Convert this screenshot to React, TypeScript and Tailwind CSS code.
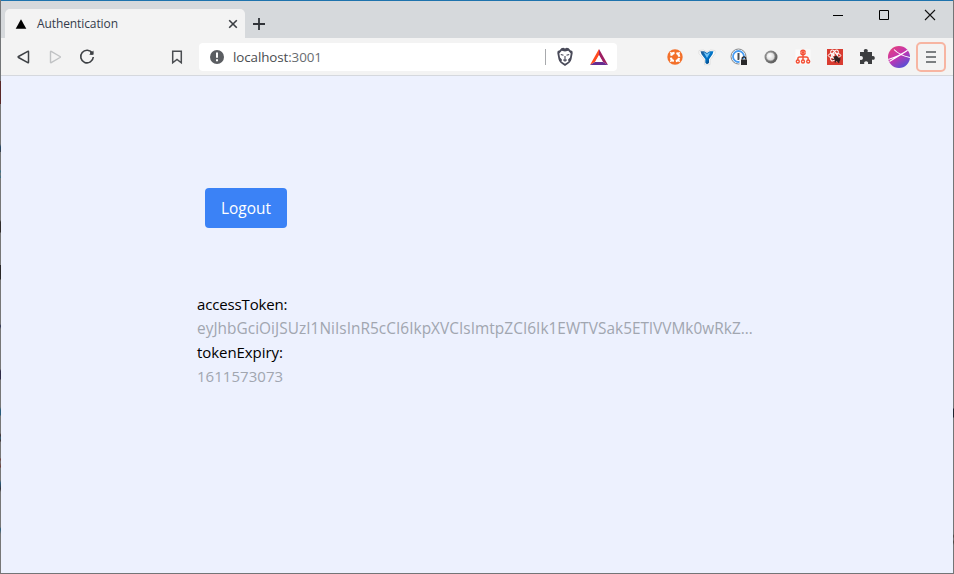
import type { ReactNode } from "react";

function Icon({ children, className = "" }: { children: ReactNode; className?: string }) {
  return (
    <svg viewBox="0 0 24 24" className={`h-6 w-6 shrink-0 ${className}`} fill="none">
      {children}
    </svg>
  );
}

function TabStrip() {
  return (
    <div className="flex h-[37px] shrink-0 items-end bg-[#d6d9dc] pl-1">
      <div className="flex h-[29px] w-[240px] items-center rounded-t-[5px] bg-[#f3f3f3] pl-[10px] pr-[6px]">
        <svg viewBox="0 0 12 12" className="h-3 w-3">
          <path d="M6 1.2 11.3 10.8H.7Z" fill="#000" />
        </svg>
        <span className="ml-[10px] flex-1 text-[12px] leading-[16px] tracking-[-0.1px] text-[#333b4b]">Authentication</span>
        <svg viewBox="0 0 12 12" className="h-3 w-3" fill="none">
          <path d="m2.2 2.2 7.6 7.6m0-7.6L2.2 9.8" stroke="#3b3e43" strokeWidth="1.6" />
        </svg>
      </div>
      <svg viewBox="0 0 28 29" className="h-[29px] w-7" fill="none">
        <path d="M8 15h12M14 9v12" stroke="#303338" strokeWidth="1.8" />
      </svg>
      <div className="ml-auto flex h-[37px] w-[138px]">
        <svg viewBox="0 0 138 37" className="h-[37px] w-[138px]" fill="none">
          <path d="M18 14.5h10" stroke="#000" />
          <path d="M64.5 9.5h9v9h-9Z" stroke="#000" />
          <path d="m110 9 10 10m0-10-10 10" stroke="#111" strokeWidth="1.1" />
        </svg>
      </div>
    </div>
  );
}

function AddressBar() {
  return (
    <div className="ml-[10px] flex h-7 w-[418px] items-center rounded-[4px] bg-white pl-[6px] pr-[6px]">
      <Icon>
        <circle cx="12" cy="12" r="7" fill="#5b5e62" />
        <path d="M12 7.6v5.2" stroke="#fff" strokeWidth="2" />
        <path d="M12 14.3v2" stroke="#fff" strokeWidth="2" />
      </Icon>
      <span className="ml-1 flex-1 text-[13.4px] leading-[20px] tracking-[-0.1px] text-[#4a4d51]">localhost<span className="text-[#696c70]">:3001</span></span>
      <span className="h-4 w-px bg-[#a8aaad]" />
      <Icon className="ml-[7px]">
        <path d="m8.3 3.2 2-.4L12 3.4l1.7-.6 2 .4 1.6 2 2 .8.4 2-1.2 6.3c-.5 2.4-2.7 4.4-6.5 6.8-3.8-2.4-6-4.4-6.5-6.8L4.3 8l.4-2 2-.8Z" fill="#494a59" />
        <path d="m8.700 5.800 3.300.6 3.300-.6 2.400 2.700-.7 4-2 2.200.6 1.700L12 18.800l-3.600-2.400.6-1.700-2-2.200-.7-4Z" fill="#fff" />
        <path d="m7.800 9.500 2.700.8m5.700-.8-2.700.8M12 11v3.500m-1.800.7 1.800-.8 1.800.8M12 15v1.700" stroke="#494a59" strokeWidth="1.100" />
      </Icon>
      <Icon className="ml-[10px]">
        <path d="M12 4 3 20l5-3 4-7Z" fill="#ff4b20" />
        <path d="m12 4 9 16-5-3-4-7Z" fill="#9e1f63" />
        <path d="M3 20h18l-5-3H8Z" fill="#662d91" />
        <path d="m12 10.400-3.700 6.300h7.400Z" fill="#fff" />
      </Icon>
    </div>
  );
}

function Extensions() {
  return (
    <div className="ml-auto flex items-center gap-2">
      <Icon>
        <circle cx="12" cy="12" r="7.7" fill="#f3702a" />
        <circle cx="12" cy="12" r="4.200" stroke="#fff" strokeWidth="2.200" strokeDasharray="4.600 2" strokeDashoffset="-1" />
        <path d="m7.300 7.300 1.800 1.800m5.800 5.800 1.800 1.800m0-9.400-1.800 1.800m-5.800 5.800-1.800 1.800" stroke="#fff" strokeWidth="1.500" />
      </Icon>
      <Icon>
        <path d="M4 5.500 8.500 5 12 7l3.500-2 4.500.5v3L15 15v4.700H9.500V15L4 8.500Z" fill="#fff" stroke="#d4d4d4" strokeWidth=".7" />
        <path d="M5.500 6.200h3.700L12 8l2.800-1.800h3.700l-1 3-3.500 5v3.600q-2 2.400-3.700 0v-3.600l-3.800-5Z" fill="url(#yBlue)" />
        <path d="m8.500 7 3.500 6 3.500-6-3.500 2Z" fill="#72c2f5" />
        <defs><linearGradient id="yBlue" x1="0" y1="0" x2="1" y2="1"><stop stopColor="#235a91" /><stop offset=".5" stopColor="#0077cc" /><stop offset="1" stopColor="#092c5d" /></linearGradient></defs>
      </Icon>
      <Icon>
        <circle cx="11.500" cy="11.500" r="7.500" fill="#fff" stroke="#85878a" strokeWidth="1" />
        <circle cx="11.500" cy="11.500" r="5.500" stroke="#499df2" strokeWidth="1.800" />
        <path d="M11.500 8v7" stroke="#4b4e53" strokeWidth="2" />
        <path d="M12.500 14h9v7h-9Z" fill="#f3f3f3" />
        <path d="M14 14.500h6V20h-6Z" fill="#29292b" />
        <path d="M15.200 14.500V13q1.800-2.400 3.600 0v1.500" stroke="#29292b" strokeWidth="1.300" />
      </Icon>
      <Icon>
        <circle cx="12" cy="12" r="6.500" fill="url(#orbEdge)" />
        <circle cx="11.500" cy="11.500" r="4.300" fill="url(#orb)" stroke="#999" strokeWidth=".7" />
        <defs><linearGradient id="orbEdge" x1="0" y1="0" x2="1" y2="1"><stop stopColor="#999" /><stop offset="1" stopColor="#505050" /></linearGradient><radialGradient id="orb" cx=".4" cy=".4"><stop stopColor="#fff" /><stop offset="1" stopColor="#ddd" /></radialGradient></defs>
      </Icon>
      <Icon>
        <path d="M4.500 4.500h15v15h-15Z" fill="#fafafa" />
        <circle cx="12" cy="7.500" r="2.900" fill="#f45137" />
        <path d="m11 6.500-1 1 1 1m2-2 1 1-1 1" stroke="#fff" strokeWidth=".7" />
        <path d="M12 10v5m-5.200 0v-1q0-2 2-2h6.400q2 0 2 2v1" stroke="#f45137" strokeWidth="1.400" />
        <g stroke="#f45137" strokeWidth="1.400"><circle cx="6.800" cy="16.500" r="1.500" /><circle cx="12" cy="16.500" r="1.500" /><circle cx="17.200" cy="16.500" r="1.500" /></g>
      </Icon>
      <Icon>
        <path d="M4 4h16v16H4Z" fill="#d93c31" />
        <g stroke="#fff" strokeWidth="1"><ellipse cx="11.500" cy="10.500" rx="6.300" ry="2.400" /><ellipse cx="11.500" cy="10.500" rx="2.400" ry="6" transform="rotate(30 11.500 10.500)" /><ellipse cx="11.500" cy="10.500" rx="2.400" ry="6" transform="rotate(-30 11.500 10.500)" /></g>
        <path d="m10.500 12 3-1.500 4 4-1.500 3-4-2Z" fill="#302021" />
        <path d="m9.500 14.500 8-1.500m-4.500-2 3 7m-4-.5 2-6" stroke="#302021" strokeWidth="1.100" />
        <circle cx="10.500" cy="10" r="1.200" fill="#fff" />
      </Icon>
      <Icon>
        <path d="M5 7h4.100c-.9-1.800.2-3 1.700-3s2.600 1.200 1.700 3H17v4.200c1.600-.7 2.800.2 2.800 1.700s-1.200 2.400-2.800 1.700V19h-4c.6-1.800-.5-2.700-1.900-2.700S8.700 17.200 9.300 19H5v-4.200c1.800.7 2.900-.4 2.900-1.800S6.800 10.600 5 11.200Z" fill="#3c3d3f" />
      </Icon>
      <Icon>
        <defs><linearGradient id="avatar" x1=".2" y1="0" x2=".85" y2="1"><stop stopColor="#e3417c" /><stop offset=".45" stopColor="#c334b1" /><stop offset="1" stopColor="#4354dc" /></linearGradient><clipPath id="avatarClip"><circle cx="12" cy="12" r="11" /></clipPath></defs>
        <circle cx="12" cy="12" r="11" fill="url(#avatar)" />
        <g clipPath="url(#avatarClip)" stroke="#fff" strokeWidth="1.100"><path d="M1 14.500Q12 11.500 21 5M7 4.500Q12 10 23 12.500M2.500 16.500 14 9.500" /></g>
      </Icon>
    </div>
  );
}

function Toolbar() {
  return (
    <div className="flex h-[38px] shrink-0 items-center border-b border-[#d5d8de] bg-[#f3f3f3] pl-[10px] pr-[7px]">
      <div className="flex items-center gap-2">
        <Icon><path d="M17.500 6.700v10.600q0 .7-.7.3L7.500 12.500q-.8-.5 0-1L16.800 6.400q.7-.4.700.3Z" stroke="#3e4145" strokeWidth="1.500" /></Icon>
        <Icon><path d="M7.500 6.700v10.600q0 .7.700.3L17 12.500q.8-.5 0-1L8.200 6.400q-.7-.4-.7.3Z" stroke="#c0c2c4" strokeWidth="1.400" /></Icon>
        <Icon><path d="M17.400 8.300A6.300 6.300 0 1 0 18.300 12" stroke="#3e4145" strokeWidth="1.600" /><path d="M18.500 5.500v4.300h-4.300Z" fill="#3e4145" /><circle cx="16.700" cy="8" r="1.700" fill="#3e4145" /></Icon>
      </div>
      <Icon className="ml-[66px]"><path d="M7.700 6.200h8.600v11.600L12 14.500l-4.300 3.300Z" stroke="#4b4e52" strokeWidth="1.500" /></Icon>
      <AddressBar />
      <Extensions />
      <button className="ml-[5px] flex h-[30px] w-[30px] items-center justify-center rounded-[5px] border-2 border-[#f7b5a2]">
        <svg viewBox="0 0 12 14" className="h-[14px] w-3" fill="none"><path d="M1 2h10M1 7h10M1 12h10" stroke="#56595c" strokeWidth="1.600" /></svg>
      </button>
    </div>
  );
}

export default function App() {
  return (
    <div className="grid h-[574px] w-[954px] grid-cols-[1px_952px_1px] overflow-hidden bg-[#737577] font-['Open_Sans','Noto_Sans',sans-serif]">
      <div className="bg-[linear-gradient(to_bottom,#737577_81px,#5a2828_81px,#5a2828_104px,#777_104px,#777_144px,#234765_147px,#3b414c_152px,#777_152px,#777_170px,#31718a_171px,#777_174px,#31718a_178px,#777_178px,#777_220px,#302c2b_222px,#302c2b_232px,#777_233px,#777_265px,#292727_265px,#292727_279px,#777_280px,#777_324px,#2c3252_326px,#777_329px,#777_369px,#302c48_371px,#302c48_379px,#777_380px,#777_407px,#285c7b_410px,#285c7b_415px,#777_416px,#777_433px,#433334_435px,#356078_438px,#433334_441px,#777_442px,#777_458px,#713b37_459px,#777_462px,#713b37_467px,#777_468px,#777_480px,#285c7b_483px,#35333a_489px,#777_492px,#777_527px,#285c7b_529px,#777_534px)]" />
      <div className="flex h-[574px] flex-col border-b border-b-[#737577] border-t border-t-[#1e73ad]">
        <TabStrip />
        <Toolbar />
        <main className="flex-1 bg-[#edf1fe] pl-[196px] pt-28 text-[15px] leading-6">
          <button className="ml-2 flex h-10 w-[82px] items-center justify-center rounded bg-[#3b82f6] pt-px text-[15.4px] text-white">Logout</button>
          <dl className="mt-16 w-[558px]">
            <dt className="tracking-[-0.15px] text-black">accessToken:</dt>
            <dd className="whitespace-nowrap pt-[2px] text-[15.4px] leading-[22px] tracking-[0.04px] text-[#a1a6b0]">eyJhbGciOiJSUzI1NiIsInR5cCI6IkpXVCIsImtpZCI6Ik1EWTVSak5ETlVVMk0wRkZ…</dd>
            <dt className="tracking-[-0.07px] text-black">tokenExpiry:</dt>
            <dd className="tracking-[0.04px] text-[#a1a6b0]">1611573073</dd>
          </dl>
        </main>
      </div>
      <div className="bg-[linear-gradient(to_bottom,#737577_408px,#20242f_409px,#20242f_417px,#737577_418px,#737577_534px,#49423f_536px,#737577_539px,#49423f_542px,#737577_545px)]" />
    </div>
  );
}
